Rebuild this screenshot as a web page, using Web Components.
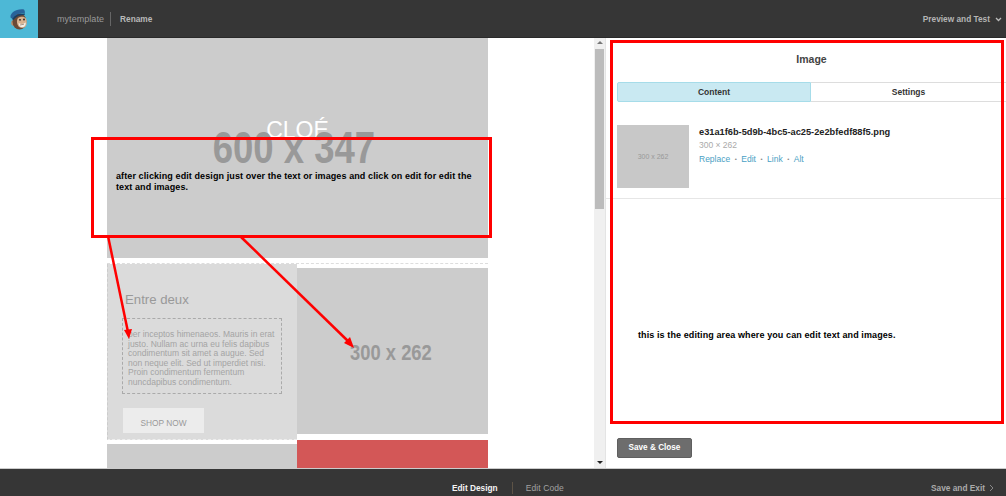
<!DOCTYPE html>
<html><head><meta charset="utf-8">
<style>
html,body{margin:0;height:100%;overflow:hidden;background:#fff;font-family:"Liberation Sans",Arial,sans-serif}
body{display:flex;flex-direction:column;height:496px;position:relative}
</style></head>
<body>
<top-bar></top-bar>
<work-area>
  <email-canvas slot="canvas"></email-canvas>
  <image-panel slot="panel"></image-panel>
</work-area>
<bottom-bar></bottom-bar>
<red-notes></red-notes>
<script>
(()=>{
  const def=(name,html)=>customElements.define(name,class extends HTMLElement{
    connectedCallback(){
      if(this.shadowRoot)return;
      this.attachShadow({mode:'open'}).innerHTML=html;
    }
  });

  def('top-bar',`<style>
:host{display:flex;flex:none;height:38px;background:#363636;color:#bbb;font-size:8.300px;font-family:"Liberation Sans",sans-serif;align-items:stretch;box-shadow:inset 0 -1px #2a2a2a}
.logo{width:38px;background:#4db8d6;display:flex;align-items:center;justify-content:center}
.name{margin-left:19px;align-self:center;color:#9a9a9a;font-size:9px;letter-spacing:.05px;padding-right:6px;border-right:1px solid #666;line-height:14px}
.ren{margin-left:9px;align-self:center;font-weight:bold;color:#b9b9b9}
.pv{margin-left:auto;margin-right:4px;align-self:center;font-weight:bold;color:#b5b5b5;display:flex;align-items:center;gap:5px}
svg{display:block}
</style>
<div class="logo"><svg width="20" height="24" viewBox="0 0 20 24">
<ellipse cx="4.500" cy="16" rx="2.300" ry="2.800" fill="#b98c68"/>
<ellipse cx="10.500" cy="14.500" rx="7" ry="8" fill="#6a4a36"/>
<path d="M1.500 10.500C1 6 7 1.500 15 2.500c.8 1.200 1 2.500.8 3.500C11 6 6 7.500 3.500 12z" fill="#28639a"/>
<path d="M3 12C6 8 11 6.200 16 6.500l-.2 1.300C11 8 7 9.500 4.300 13z" fill="#163f66"/>
<path d="M9 11c2.500-1.800 6.500-1.800 8 .5 1 2 1 5.500 0 7.500-1.300 2-4.500 2.500-6.800 1-2.400-1.800-3-7-1.200-9z" fill="#d9b28f"/>
<path d="M9.500 16c2.300 1.300 5 1.200 7.300-.5-.1 2.800-1.500 4.800-3.700 4.800-2.100 0-3.300-1.800-3.600-4.300z" fill="#f3efe8"/>
<path d="M11 18l4-.8" stroke="#7a5a45" stroke-width=".6"/>
<circle cx="11" cy="12.800" r=".9" fill="#222"/><circle cx="15" cy="12.500" r=".9" fill="#222"/>
</svg></div>
<span class="name">mytemplate</span><span class="ren">Rename</span>
<span class="pv">Preview and Test <svg width="7" height="5" viewBox="0 0 7 5"><path d="M1 1l2.500 2.500L6 1" fill="none" stroke="#bbb" stroke-width="1.300"/></svg></span>`);

  def('work-area',`<style>
:host{display:flex;height:430px;flex:none;background:#fff}
.left{width:594px;flex:none;overflow:hidden}
.bar{width:11px;flex:none;background:#f0f0f0;border-right:1px solid #e4e4e4;display:flex;flex-direction:column;align-items:center;position:relative}
.bar i{display:block;width:9px;height:160px;background:#bcbcbc;margin-top:11px}
.up,.dn{width:0;height:0;border:3px solid transparent;position:absolute;left:2.500px}
.up{top:3px;border-bottom:3px solid #777;border-top:0}
.dn{bottom:4px;border-top:3px solid #222;border-bottom:0}
.right{flex:1;min-width:0}
</style>
<div class="left"><slot name="canvas"></slot></div>
<div class="bar"><span class="up"></span><i></i><span class="dn"></span></div>
<div class="right"><slot name="panel"></slot></div>`);

  def('email-canvas',`<style>
:host{display:block;width:381px;margin-left:107px;height:430px;overflow:hidden;font-family:"Liberation Sans",sans-serif}
.hero{height:220px;background:#ccc;position:relative;display:flex;flex-direction:column;align-items:center;color:#fff;font-size:23px}
.hero b{margin-top:78px;font-weight:normal;line-height:28px}
.ph{position:absolute;inset:0;display:flex;align-items:center;justify-content:center;color:#999;font-weight:bold;padding-right:7px;box-sizing:border-box}
.ph span{display:inline-block;transform:scaleX(.83);font-size:44px}
.row{display:flex;margin-top:5px;border-top:1px dashed #ddd}
.l{width:190px;height:176px;background:#dbdbdb;box-sizing:border-box;padding:28px 0 0 14px;color:#999;border-left:1px dashed #ccc;border-bottom:1px dashed #eee}
.l h3{margin:0;font-weight:normal;font-size:13.200px;line-height:16px;padding-left:3px}
.txt{margin-top:10px;width:160px;height:76px;box-sizing:border-box;border:1px dashed #aaa;padding:11px 5px;font-size:8.500px;line-height:9.600px;color:#a4a4a4;white-space:nowrap}
.btn{margin:14px 0 0 1px;width:81px;height:25px;background:#ececec;display:flex;align-items:flex-end;justify-content:center;font-size:8.300px;line-height:20px;color:#999}
.r{flex:1;padding-top:4px;height:172px;display:flex;flex-direction:column}
.r .g{height:166px;background:#ccc;display:flex;align-items:center;justify-content:center;color:#999;font-weight:bold;padding:3px 4px 0 0;box-sizing:border-box}
.r .g span{display:inline-block;transform:scaleX(.835);font-size:22px}
.row2{display:flex;height:40px}
.row2 .a{width:190px;margin-top:4px;background:#ccc}
.row2 .b{flex:1;background:#d35757}
</style>
<div class="hero"><b>CLOÉ</b><div class="ph"><span>600 x 347</span></div></div>
<div class="row">
  <div class="l"><h3>Entre deux</h3>
    <div class="txt">per inceptos himenaeos. Mauris in erat<br>justo. Nullam ac urna eu felis dapibus<br>condimentum sit amet a augue. Sed<br>non neque elit. Sed ut imperdiet nisi.<br>Proin condimentum fermentum<br>nuncdapibus condimentum.</div>
    <div class="btn">SHOP NOW</div>
  </div>
  <div class="r"><div class="g"><span>300 x 262</span></div></div>
</div>
<div class="row2"><div class="a"></div><div class="b"></div></div>`);

  def('image-panel',`<style>
:host{display:block;height:430px;font-family:"Liberation Sans",sans-serif;color:#333;position:relative}
h2{margin:0;text-align:center;font-size:10.500px;line-height:14px;padding:14px 0 0 11px;height:30px;color:#444}
.tabs{display:flex;margin-left:11px;height:20px;font-size:8.500px;font-weight:bold;line-height:18px;text-align:center}
.tabs div{box-sizing:border-box}
.on{width:194px;flex:none;background:#c9e9f2;border:1px solid #a6dce9;border-radius:2px 0 0 2px;color:#333}
.off{flex:1;border:1px solid #ddd;border-left:0;border-right:0;color:#333}
.item{display:flex;gap:10px;padding:23px 0 10px 11px;border-bottom:1px solid #e6e6e6;height:63px}
.th{width:72px;height:63px;background:#c8c8c8;color:#999;font-size:7px;display:flex;align-items:center;justify-content:center}
.f{font-size:9.250px;font-weight:bold;color:#222;line-height:13px;margin-top:1px}
.d{font-size:8.500px;color:#aaa;line-height:13px}
.ln{font-size:8.500px;color:#4a9fc4;line-height:14px;display:flex;gap:4px;align-items:center}
.ln i{font-style:normal;color:#888;font-size:6px;padding:0 .5px}
.save{position:absolute;left:11px;top:400px;width:75px;height:20px;box-sizing:border-box;background:#6d6d6d;border:1px solid #5f5f5f;border-radius:2px;color:#fff;font-size:8.200px;font-weight:bold;line-height:18px;text-align:center}
</style>
<h2>Image</h2>
<div class="tabs"><div class="on">Content</div><div class="off">Settings</div></div>
<div class="item"><div class="th">300 x 262</div>
<div><div class="f">e31a1f6b-5d9b-4bc5-ac25-2e2bfedf88f5.png</div><div class="d">300 × 262</div>
<div class="ln"><span>Replace</span><i>•</i><span>Edit</span><i>•</i><span>Link</span><i>•</i><span>Alt</span></div></div></div>
<div class="save">Save &amp; Close</div>`);

  def('bottom-bar',`<style>
:host{display:flex;flex:none;height:27px;background:#363636;border-top:1px solid #ccc;box-sizing:content-box;align-items:center;font-family:"Liberation Sans",sans-serif;font-size:8.300px;font-weight:bold;color:#aaa;position:relative;padding-top:0}
.mid{position:absolute;left:452px;top:13px;display:flex;line-height:12px}
.a{color:#f4f4f4;padding-right:14px;border-right:1px solid #5d5346}
.b{margin-left:13px;color:#a2a2a2;font-weight:normal;font-size:8.500px;letter-spacing:.1px}
.ex{margin:10px 12px 0 auto;color:#aaa;display:flex;align-items:center;gap:4px}
svg{display:block}
</style>
<div class="mid"><span class="a">Edit Design</span><span class="b">Edit Code</span></div>
<div class="ex">Save and Exit <svg width="5" height="8" viewBox="0 0 5 8"><path d="M1 1l3 3-3 3" fill="none" stroke="#888" stroke-width="1"/></svg></div>`);

  def('red-notes',`<style>
:host{position:absolute;inset:0;display:block;pointer-events:none;font-family:"Liberation Sans",sans-serif;font-size:9px;font-weight:bold;color:#000;line-height:11px;letter-spacing:.1px}
.box{position:absolute;border:3px solid #f00;box-sizing:border-box}
p{position:absolute;margin:0}
svg{position:absolute;left:0;top:0}
</style>
<div class="box" style="left:91px;top:137px;width:401px;height:101px"></div>
<div class="box" style="left:610px;top:40px;width:394px;height:384px"></div>
<svg width="1006" height="496"><g stroke="#f00" stroke-width="2.500" fill="none">
<path d="M108 236L128 332"/><path d="M240 236L350 343"/></g>
<path d="M129 339L124 330 132 329z" fill="#f00"/><path d="M354 348L344 343 350 337z" fill="#f00"/></svg>
<p style="left:116px;top:171px;width:370px">after clicking edit design just over the text or images and click on edit for edit the text and images.</p>
<p style="left:638px;top:330px;white-space:nowrap">this is the editing area where you can edit text and images.</p>`);
})();
</script>
</body></html>
